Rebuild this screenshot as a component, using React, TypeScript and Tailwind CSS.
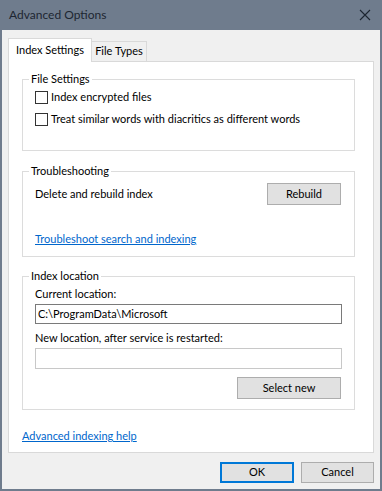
import React from "react";

const font = { fontFamily: 'Lato, "Liberation Sans", sans-serif' };

const Checkbox = ({ label, className = "" }: { label: string; className?: string }) => (
  <label className={`flex items-center whitespace-nowrap ${className}`}>
    <span className="w-[13px] h-[13px] border border-[#333] bg-white shrink-0" />
    <span className="ml-[3px]">{label}</span>
  </label>
);

const WinButton = ({ children, className = "" }: { children: React.ReactNode; className?: string }) => (
  <button className={`bg-[#e1e1e1] border border-[#adadad] flex items-center justify-center ${className}`}>
    {children}
  </button>
);

const Group = ({ title, className = "", children }: { title: string; className?: string; children: React.ReactNode }) => (
  <fieldset className={`border border-[#dcdcdc] ml-[13px] mr-[18px] ${className}`}>
    <legend className="ml-[6px] px-[2px] leading-[16px]">{title}</legend>
    <div className="pl-[12px] pr-[13px]">{children}</div>
  </fieldset>
);

export default function App() {
  return (
    <div
      className="w-[382px] h-[491px] flex flex-col bg-[#6f7c8d] text-[11px] text-black"
      style={font}
    >
      {/* title bar */}
      <div className="h-[30px] flex items-center justify-between pl-[9px] pr-[10px] shrink-0">
        <span className="text-[12px] text-[#1d2631]">Advanced Options</span>
        <svg width="12" height="12" viewBox="0 0 12 12" className="mr-[1px]">
          <path d="M1 1L11 11M11 1L1 11" stroke="#1d2631" strokeWidth="1.1" />
        </svg>
      </div>

      {/* body */}
      <div className="flex-1 mx-[2px] mb-[2px] bg-[#f0f0f0] flex flex-col px-[6px] pt-[8px]">
        {/* tabs */}
        <div className="flex items-end">
          <div className="w-[84px] h-[24px] bg-white border border-b-0 border-[#d9d9d9] relative z-10 -mb-px flex items-center justify-center">
            Index Settings
          </div>
          <div className="w-[55px] h-[20px] bg-[#f0f0f0] border border-l-0 border-b-0 border-[#d9d9d9] flex items-center justify-center">
            File Types
          </div>
        </div>

        {/* panel */}
        <div className="h-[392px] bg-white border border-[#d9d9d9] flex flex-col pt-[9px]">
          <Group title="File Settings">
            <Checkbox label="Index encrypted files" className="h-[21px]" />
            <Checkbox label="Treat similar words with diacritics as different words" className="h-[22px]" />
            <div className="h-[20px]" />
          </Group>

          <Group title="Troubleshooting" className="mt-[12px]">
            <div className="flex items-center justify-between mt-[4px]">
              <span>Delete and rebuild index</span>
              <WinButton className="w-[74px] h-[22px]">Rebuild</WinButton>
            </div>
            <div className="mt-[26px] h-[16px] leading-[16px] pb-[9px] box-content">
              <a className="text-[#0066cc] underline cursor-pointer">Troubleshoot search and indexing</a>
            </div>
          </Group>

          <Group title="Index location" className="mt-[11px]">
            <div className="mt-[2px] leading-[16px]">Current location:</div>
            <div className="mt-[2px] h-[20px] border border-[#7a7a7a] bg-white flex items-center pl-[2px] mr-[-1px]">
              C:\ProgramData\Microsoft
            </div>
            <div className="mt-[6px] leading-[16px]">New location, after service is restarted:</div>
            <div className="mt-[2px] h-[21px] border border-[#c8c8c8] bg-white mr-[-1px]" />
            <div className="flex justify-end mt-[8px] pb-[10px]">
              <WinButton className="w-[104px] h-[22px]">Select new</WinButton>
            </div>
          </Group>

          <div className="ml-[13px] mt-[18px] leading-[16px]">
            <a className="text-[#0066cc] underline cursor-pointer">Advanced indexing help</a>
          </div>
        </div>

        {/* dialog buttons */}
        <div className="flex justify-end gap-[7px] mt-[9px] pr-0">
          <button className="w-[74px] h-[21px] bg-[#e1e1e1] border-2 border-[#0078d7]">OK</button>
          <WinButton className="w-[73px] h-[21px]">Cancel</WinButton>
        </div>
      </div>
    </div>
  );
}
